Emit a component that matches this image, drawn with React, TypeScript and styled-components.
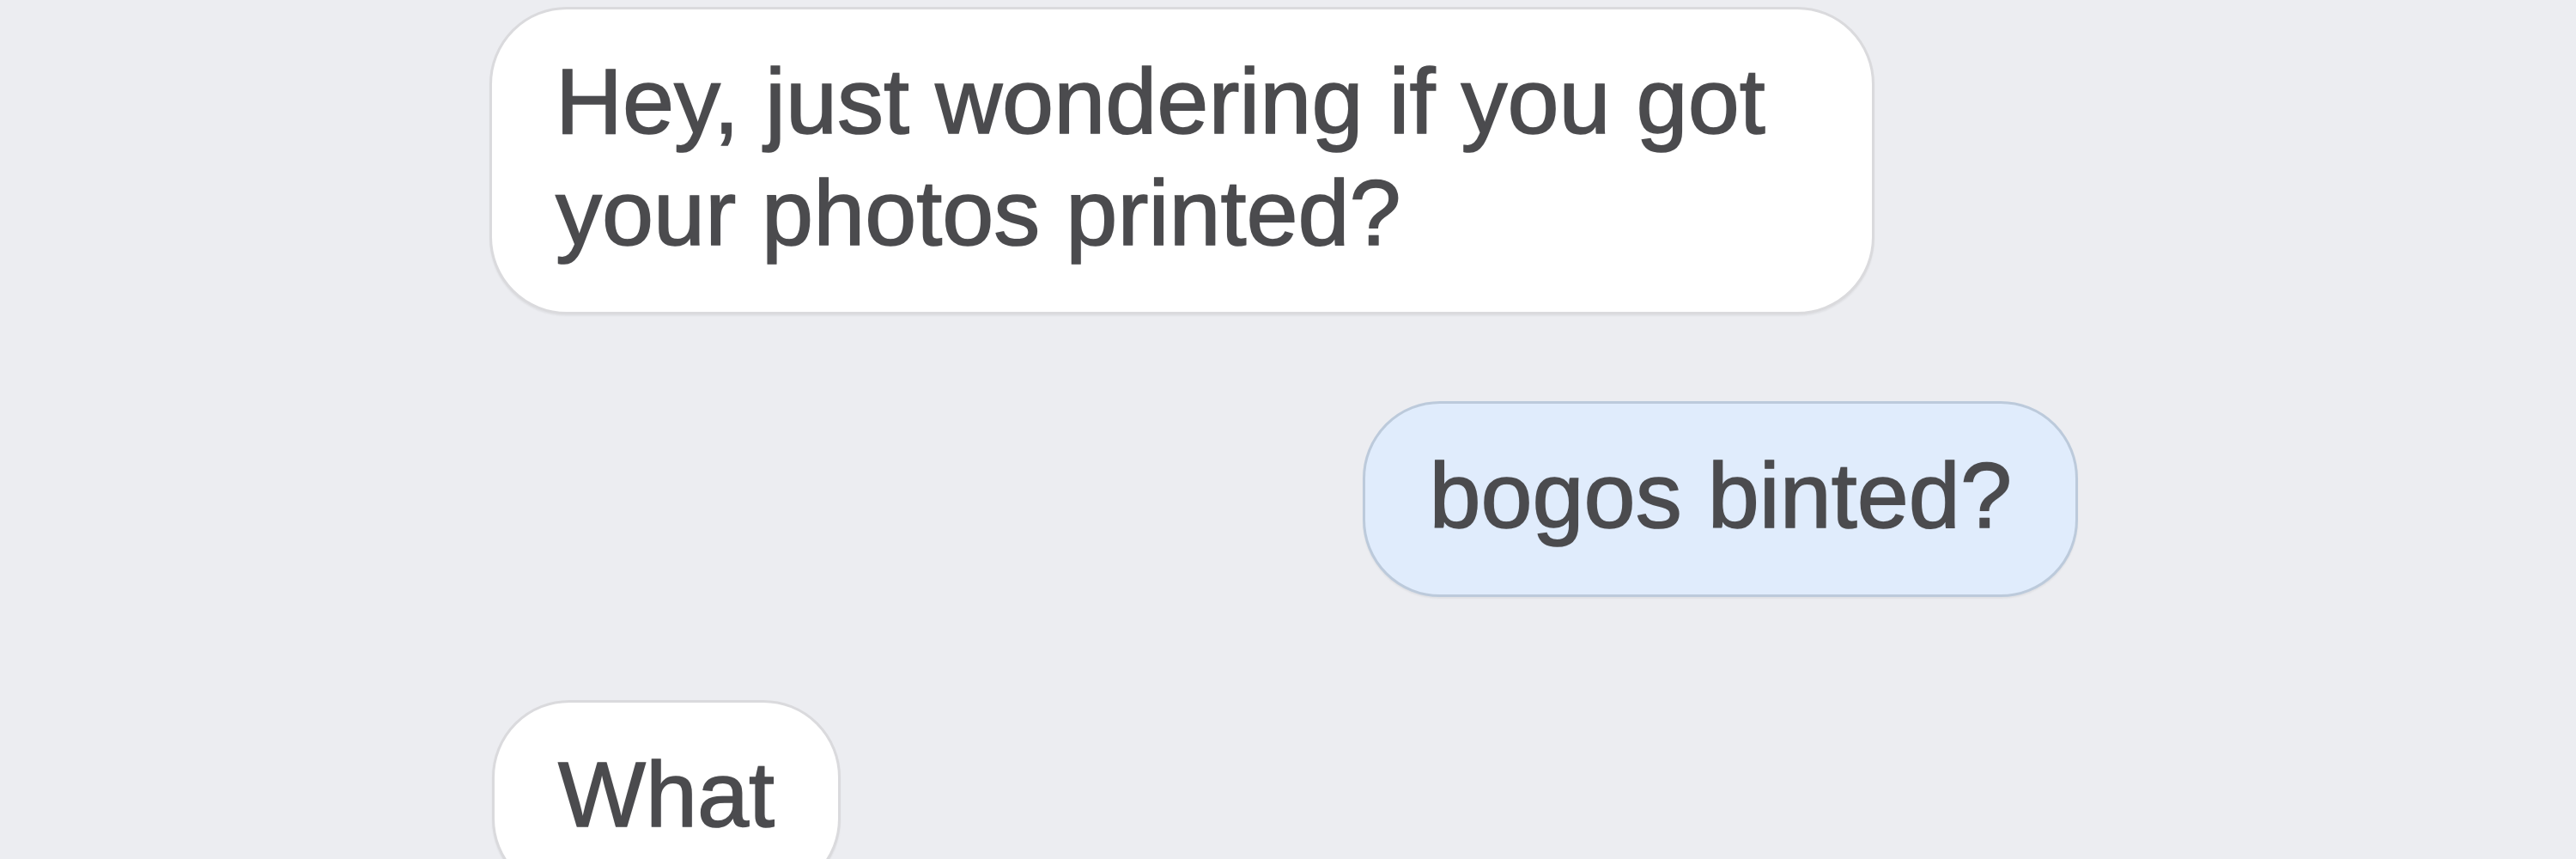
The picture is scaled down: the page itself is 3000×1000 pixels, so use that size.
import React from "react";
import styled, { createGlobalStyle } from "styled-components";

const GlobalStyle = createGlobalStyle`
  html, body {
    margin: 0;
    padding: 0;
    background: #ecedf1;
  }
  body {
    font-family: "Liberation Sans", Arial, Helvetica, sans-serif;
    overflow: hidden;
  }
`;

const Thread = styled.div`
  box-sizing: border-box;
  width: 1850px;
  margin-left: 570px;
  padding-top: 8px;
  display: flex;
  flex-direction: column;
`;

const Row = styled.div<{ $out?: boolean; $space: number }>`
  display: flex;
  justify-content: ${(p) => (p.$out ? "flex-end" : "flex-start")};
  margin-top: ${(p) => p.$space}px;
`;

const Bubble = styled.div<{ $out?: boolean; $shift?: number }>`
  box-sizing: border-box;
  max-width: 1613px;
  margin-left: ${(p) => p.$shift ?? 0}px;
  padding: 42px 74px 50px;
  border-radius: 90px;
  border: 3px solid ${(p) => (p.$out ? "#bccadb" : "#dadadd")};
  background: ${(p) => (p.$out ? "#e0ecfc" : "#ffffff")};
  box-shadow: 0 2px 2px rgba(0, 0, 0, 0.05);
  color: #4b4b4e;
  font-size: 108px;
  line-height: 130px;
  -webkit-text-stroke: 1.5px #4b4b4e;
  text-shadow: 0 0 1.5px rgba(75, 75, 78, 0.6);
`;

export default function App() {
  return (
    <>
      <GlobalStyle />
      <Thread>
        <Row $space={0}>
          <Bubble>Hey, just wondering if you got your photos printed?</Bubble>
        </Row>
        <Row $out $space={101}>
          <Bubble $out>bogos binted?</Bubble>
        </Row>
        <Row $space={120}>
          <Bubble $shift={3}>What</Bubble>
        </Row>
      </Thread>
    </>
  );
}
